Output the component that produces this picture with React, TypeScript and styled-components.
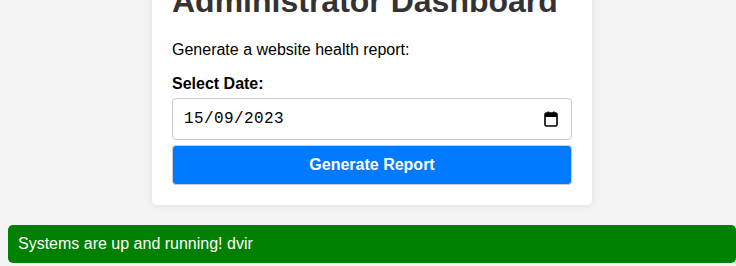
import React from "react";
import styled, { createGlobalStyle } from "styled-components";

const GlobalStyle = createGlobalStyle`
  html, body {
    margin: 0;
    padding: 0;
    background: #f4f4f4;
    font-family: "Liberation Sans", Arial, sans-serif;
    overflow: hidden;
  }
`;

const Page = styled.div`
  padding: 0 0 0 8px;
  margin-top: -37px;
  display: flex;
  flex-direction: column;
  align-items: stretch;
`;

const Card = styled.div`
  width: 440px;
  box-sizing: border-box;
  margin: 0 auto 20px;
  padding: 20px;
  background: #fff;
  border-radius: 5px;
  box-shadow: 0 0 10px rgba(0, 0, 0, 0.1);
`;

const Title = styled.h1`
  margin: 0 0 21px;
  font-size: 32px;
  font-weight: bold;
  color: #333;
`;

const Text = styled.p`
  margin: 0 0 16px;
  font-size: 16px;
  color: #000;
`;

const Label = styled.label`
  display: block;
  font-weight: bold;
  font-size: 16px;
  margin-bottom: 5px;
`;

const Field = styled.div`
  position: relative;
  margin: 0 0 5px;
`;

const DateInput = styled.input`
  display: block;
  width: 100%;
  height: 42px;
  box-sizing: border-box;
  padding: 10px 40px 10px 11px;
  margin: 0;
  border: 1px solid #ccc;
  border-radius: 4px;
  font-family: "Liberation Mono", monospace;
  font-size: 16px;
  letter-spacing: 0.4px;
  color: #000;
  background: #fff;
  outline: none;
`;

const CalendarIcon = styled.svg`
  position: absolute;
  right: 13px;
  top: 13px;
  width: 16px;
  height: 16px;
  pointer-events: none;
`;

const Button = styled.button`
  display: block;
  width: 100%;
  height: 40px;
  box-sizing: border-box;
  border: 1px solid #ccc;
  border-radius: 4px;
  background: #007bff;
  color: #fff;
  font-family: "Liberation Sans", Arial, sans-serif;
  font-size: 16px;
  font-weight: bold;
  cursor: pointer;
`;

const Status = styled.div`
  background: green;
  color: #fff;
  padding: 10px;
  border-radius: 5px;
  font-size: 16px;
`;

export default function App() {
  return (
    <>
      <GlobalStyle />
      <Page>
        <Card>
          <Title>Administrator Dashboard</Title>
          <Text>Generate a website health report:</Text>
          <Label htmlFor="date">Select Date:</Label>
          <Field>
            <DateInput id="date" type="text" defaultValue="15/09/2023" />
            <CalendarIcon viewBox="0 0 16 16" aria-hidden="true">
              <rect x="2" y="2" width="12" height="13" rx="1.5" fill="none" stroke="#000" strokeWidth="1.6" />
              <rect x="2" y="2" width="12" height="4" fill="#000" />
              <rect x="4.5" y="0.5" width="1.6" height="3" fill="#000" />
              <rect x="9.9" y="0.5" width="1.6" height="3" fill="#000" />
            </CalendarIcon>
          </Field>
          <Button>Generate Report</Button>
        </Card>
        <Status>Systems are up and running! dvir</Status>
      </Page>
    </>
  );
}
